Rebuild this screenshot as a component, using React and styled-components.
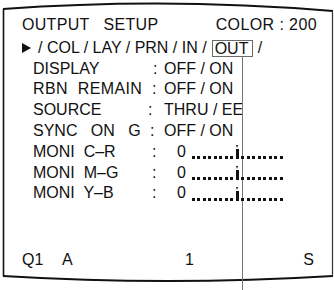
import React from 'react';
import styled, {createGlobalStyle} from 'styled-components';

const Global = createGlobalStyle`
  html, body {
    margin: 0;
    padding: 0;
    background: #fff;
  }
`;

const Screen = styled.div`
  position: relative;
  width: 334px;
  height: 290px;
  box-sizing: border-box;
  padding: 15px 17px 0 22px;
  font-family: "Liberation Sans", Arial, sans-serif;
  font-size: 16px;
  line-height: 20.8px;
  color: #111;
  overflow: hidden;
`;

const Frame = styled.svg`
  position: absolute;
  inset: 0;
  pointer-events: none;
`;

const Content = styled.div`
  position: relative;
  display: flex;
  flex-direction: column;
`;

const Header = styled.div`
  display: flex;
  justify-content: space-between;
  white-space: pre;
  margin-bottom: 2px;
`;

const Wide = styled.span`
  letter-spacing: ${p => p.spacing}px;
`;

const Tabs = styled.div`
  display: flex;
  align-items: center;
  white-space: pre;
`;

const Arrow = styled.span`
  display: inline-block;
  width: 0;
  height: 0;
  border-top: 5.5px solid transparent;
  border-bottom: 5.5px solid transparent;
  border-left: 9px solid #111;
  margin: 0 7px 0 0;
`;

const Callout = styled.span`
  position: relative;
  display: inline-block;
  line-height: 15px;
  padding: 0 4px 0 2px;
  margin-left: 5px;
  border: 1.5px solid #6a6a6a;
  &::after {
    content: "";
    position: absolute;
    left: 29px;
    top: 100%;
    width: 1.5px;
    height: 240px;
    background: #777;
  }
`;

const Setting = styled.div`
  display: grid;
  grid-template-columns: ${p => p.colon - 33}px ${p => 164 - p.colon}px 1fr;
  margin-left: 11px;
  white-space: pre;
`;

const Label = styled.span`
  letter-spacing: ${p => p.spacing || 0}px;
`;

const Value = styled.span`
  display: flex;
  align-items: baseline;
`;

const Zero = styled.span`
  margin-left: 13px;
  margin-right: 6px;
`;

const Slider = styled.span`
  display: inline-flex;
  align-items: flex-end;
  height: 12px;
  align-self: center;
  transform: translateY(1px);
`;

const DotRun = styled.span`
  display: inline-block;
  width: ${p => p.count * 5.5 - 2.5}px;
  height: 3px;
  background: repeating-linear-gradient(90deg, #111 0 3px, transparent 3px 5.5px);
`;

const Mark = styled.span`
  position: relative;
  display: inline-block;
  width: 3px;
  height: 10px;
  background: #111;
  margin: 0 2.5px;
  &::before {
    content: "";
    position: absolute;
    left: 0;
    top: -4px;
    border-left: 1.5px solid transparent;
    border-right: 1.5px solid transparent;
    border-top: 3px solid #111;
  }
`;

const Footer = styled.div`
  display: grid;
  grid-template-columns: 40px 123px 1fr auto;
  padding-right: 3px;
  margin-top: 46px;
`;

const settings = [
  {label: 'DISPLAY', colon: 153, value: 'OFF / ON'},
  {label: 'RBN  REMAIN', colon: 152, value: 'OFF / ON', spacing: 0.4},
  {label: 'SOURCE', colon: 148, value: 'THRU / EE'},
  {label: 'SYNC   ON   G', colon: 150, value: 'OFF / ON'},
];

const monitors = ['MONI  C\u2013R', 'MONI  M\u2013G', 'MONI  Y\u2013B'];

const MonitorSlider = () => (
  <Slider>
    <DotRun count={8}/>
    <Mark/>
    <DotRun count={8}/>
  </Slider>
);

const App = () => (
  <>
    <Global/>
    <Screen>
      <Frame width="334" height="290" viewBox="0 0 334 290">
        <path d="M3 9 Q168 -3 333 11" fill="none" stroke="#111" strokeWidth="2"/>
        <path d="M3 276 Q168 286 333 276" fill="none" stroke="#111" strokeWidth="2"/>
        <path d="M3.5 9 V276" fill="none" stroke="#111" strokeWidth="1.6"/>
        <path d="M332.5 11 V276" fill="none" stroke="#333" strokeWidth="1.2"/>
      </Frame>
      <Content>
        <Header>
          <Wide spacing={0.3}>OUTPUT   SETUP</Wide>
          <Wide spacing={0.4}>COLOR : 200</Wide>
        </Header>
        <Tabs>
          <Arrow/>
          <span>/ COL / LAY / PRN / IN /</span>
          <Callout>OUT</Callout>
          <span> /</span>
        </Tabs>
        {settings.map(s => (
          <Setting key={s.label} colon={s.colon}>
            <Label spacing={s.spacing}>{s.label}</Label>
            <span>:</span>
            <Value>{s.value}</Value>
          </Setting>
        ))}
        {monitors.map(m => (
          <Setting key={m} colon={152}>
            <Label>{m}</Label>
            <span>:</span>
            <Value>
              <Zero>0</Zero>
              <MonitorSlider/>
            </Value>
          </Setting>
        ))}
        <Footer>
          <span>Q1</span>
          <span>A</span>
          <span>1</span>
          <span>S</span>
        </Footer>
      </Content>
    </Screen>
  </>
);

export default App;
